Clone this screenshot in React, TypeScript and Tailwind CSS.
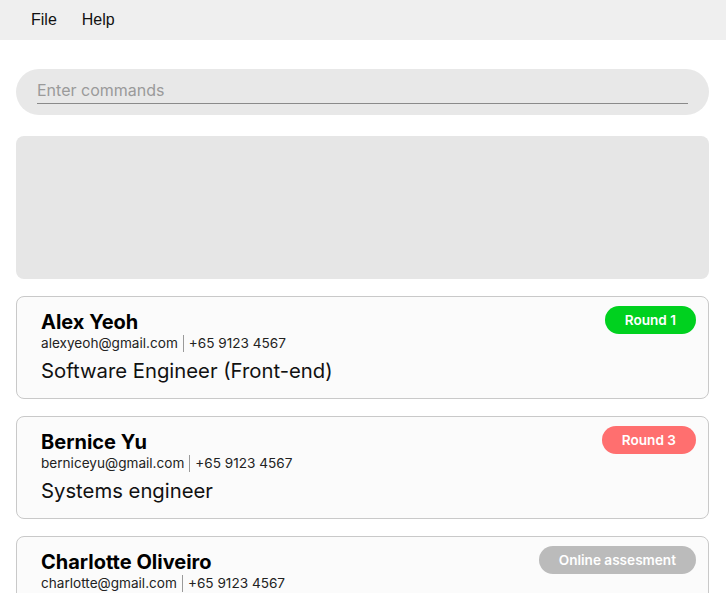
const candidates = [
  {
    name: "Alex Yeoh",
    email: "alexyeoh@gmail.com",
    phone: "+65 9123 4567",
    role: "Software Engineer (Front-end)",
    status: "Round 1",
    tone: "bg-[#00d11f]",
  },
  {
    name: "Bernice Yu",
    email: "berniceyu@gmail.com",
    phone: "+65 9123 4567",
    role: "Systems engineer",
    status: "Round 3",
    tone: "bg-[#ff6f6f]",
  },
  {
    name: "Charlotte Oliveiro",
    email: "charlotte@gmail.com",
    phone: "+65 9123 4567",
    role: "Product designer",
    status: "Online assesment",
    tone: "bg-[#bbbbbb]",
  },
];

function CandidateCard({ c }: { c: (typeof candidates)[number] }) {
  return (
    <div className="flex h-[103px] shrink-0 items-start justify-between rounded-lg border border-[#c9c9c9] bg-[#fbfbfb] pb-3 pl-6 pr-3 pt-[9px]">
      <div className="mt-1 flex flex-col">
        <span className="text-[20px] font-bold leading-6 text-black">{c.name}</span>
        <span className="flex items-center text-[13.6px] leading-[18px] text-[#222]">
          {c.email}
          <span className="mx-[5px] h-[17px] border-l border-[#9a9a9a]" />
          {c.phone}
        </span>
        <span className="mt-[5px] text-[20.3px] leading-7 text-[#111]">{c.role}</span>
      </div>
      <span
        className={`${c.tone} flex h-7 items-center rounded-full px-5 text-[13.6px] font-semibold text-white`}
      >
        {c.status}
      </span>
    </div>
  );
}

export default function App() {
  return (
    <div className="flex h-[593px] flex-col overflow-hidden bg-white font-['Inter',sans-serif]">
      <nav className="flex h-10 shrink-0 items-center gap-[25px] bg-[#efefef] pl-[31px] font-['Liberation_Sans',sans-serif] text-[16px] text-[#111]">
        <span>File</span>
        <span>Help</span>
      </nav>
      <div className="flex flex-col gap-[17px] pl-4 pr-[17px] pt-[29px]">
        <div className="flex h-[46px] items-center rounded-full bg-[#e8e8e8] px-[21px]">
          <div className="w-full border-b border-[#8a8a8a] pb-[3px] text-[16px] leading-5 text-[#9a9a9a]">
            Enter commands
          </div>
        </div>
        <div className="mt-1 h-[143px] rounded-lg bg-[#e6e6e6]" />
        {candidates.map((c) => (
          <CandidateCard key={c.name} c={c} />
        ))}
      </div>
    </div>
  );
}
